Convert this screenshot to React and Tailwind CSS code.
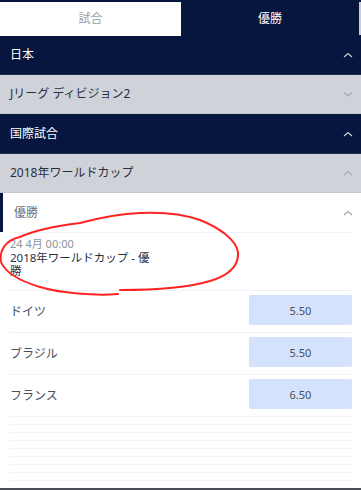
import React from 'react'

const Chevron = ({ up = true, color = '#ffffff' }) => (
  <svg width="12" height="8" viewBox="0 0 12 8" fill="none">
    {up
      ? <polyline points="2,6 6,2.5 10,6" stroke={color} strokeWidth="1.2" />
      : <polyline points="2,2.5 6,6 10,2.5" stroke={color} strokeWidth="1.2" />}
  </svg>
)

function Header({ label, dark, up = true, tall }) {
  const h = tall ? 'h-[40px]' : 'h-[39px]'
  return dark ? (
    <div className={`flex ${h} items-center justify-between bg-[#07163f] pl-[10px] pr-[7px] text-[12px] text-white border-b border-[#1c2a50]`}>
      <span>{label}</span><Chevron up={up} color="#c9ccd6" />
    </div>
  ) : (
    <div className={`flex ${h} items-center justify-between bg-[#d0d2d9] pl-[10px] pr-[7px] text-[12px] text-[#2a2f3f] border-b border-[#c4c7cf]`}>
      <span>{label}</span><Chevron up={up} color="#a3a7b3" />
    </div>
  )
}

const odds = [['ドイツ', '5.50'], ['ブラジル', '5.50'], ['フランス', '6.50']]

export default function App() {
  return (
    <div className="relative h-[490px] w-[361px] overflow-hidden bg-white font-['Noto_Sans','Noto_Sans_CJK_JP',sans-serif]">
      <div className="flex h-[36px] bg-[#07163f] pt-[2px]">
        <div className="flex w-[181px] items-center justify-center bg-white text-[12px] text-[#9a9ea9]">試合</div>
        <div className="flex flex-1 items-center justify-center text-[12px] text-white">優勝</div>
        <div className="mb-[1px] w-[2px] bg-[#c9ccd6]" />
      </div>
      <Header label="日本" dark />
      <Header label="Jリーグ ディビジョン2" up={false} />
      <Header label="国際試合" dark tall />
      <Header label="2018年ワールドカップ" />

      <div className="flex h-[39px] items-center justify-between border-l-[3px] border-[#07163f] pl-[11px] pr-[7px] text-[12px] text-[#6b707d]">
        <span>優勝</span><Chevron color="#a3a7b3" />
      </div>
      <div className="px-[10px] pr-[9px]">
        <div className="border-t border-[#eef2fb] pt-[4px] pb-[13px]">
          <div className="text-[11px] leading-[14px] text-[#8d93a0]">24 4月 00:00</div>
          <div className="w-[150px] text-[11.5px] leading-[13px] text-[#2a2f3f]">2018年ワールドカップ - 優勝</div>
        </div>
        {odds.map(([name, price]) => (
          <div key={name} className="flex h-[42px] items-start justify-between border-t border-[#eef2fb] pt-[4px]">
            <span className="pt-[8px] text-[12px] text-[#4a4f5c]">{name}</span>
            <div className="flex h-[30px] w-[103px] items-center justify-center rounded-[2px] bg-[#d5e2fb] pt-[2px] text-[11px] text-[#4a5060]">{price}</div>
          </div>
        ))}
        {Array.from({ length: 9 }).map((_, i) => (
          <div key={i} className="h-[8px] border-t border-[#f0f4fc]" />
        ))}
      </div>
      <div className="absolute bottom-0 left-0 h-[2px] w-full bg-[#4a4c56]" />

      <svg className="pointer-events-none absolute left-0 top-0" width="361" height="490" fill="none">
        <path d="M118,294 C95,296 60,293 40,287 C20,281 5,272 1,262 C-1,250 6,240 20,237 C35,230 55,226 80,223 C95,219 115,214 140,213 C160,212 180,213 200,220 C220,228 236,240 238,252 C239,265 230,275 210,281 C190,287 160,290 120,290"
          stroke="#ff2424" strokeWidth="2" strokeLinecap="round" />
      </svg>
    </div>
  )
}
